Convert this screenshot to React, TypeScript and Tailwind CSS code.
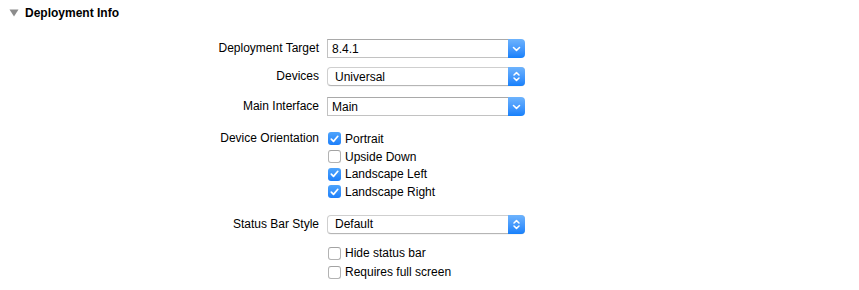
const font = { fontFamily: '"Liberation Sans", Arial, sans-serif' };

function ChevronDown() {
	return (
		<svg width="9" height="6" viewBox="0 0 9 6" className="block">
			<path d="M1.5 1.5 L4.5 4.3 L7.5 1.5" fill="none" stroke="white" strokeWidth="1.6" strokeLinecap="round" strokeLinejoin="round" />
		</svg>
	);
}

function ChevronUpDown() {
	return (
		<svg width="9" height="13" viewBox="0 0 9 13" className="block">
			<path d="M2 5 L4.5 2.6 L7 5" fill="none" stroke="white" strokeWidth="1.5" strokeLinecap="round" strokeLinejoin="round" />
			<path d="M2 8 L4.5 10.4 L7 8" fill="none" stroke="white" strokeWidth="1.5" strokeLinecap="round" strokeLinejoin="round" />
		</svg>
	);
}

function ComboBox({ value }: { value: string }) {
	return (
		<div className="flex h-[19px] w-[198px]">
			<div className="flex flex-1 items-center border border-r-0 border-[#c2c2c2] border-t-[#a9a9a9] bg-white pl-[4px] text-[12px] text-black">
				{value}
			</div>
			<div className="flex w-[17px] items-center justify-center rounded-r-[4px] bg-gradient-to-b from-[#6db3fd] to-[#1480fb]">
				<ChevronDown />
			</div>
		</div>
	);
}

function PopUp({ value }: { value: string }) {
	return (
		<div className="flex h-[19px] w-[198px] rounded-[4px] border border-[#cfcfcf] border-b-[#b5b5b5] bg-white shadow-[0_0.5px_0.5px_rgba(0,0,0,0.08)]">
			<div className="flex flex-1 items-center pl-[7px] text-[12px] text-black">{value}</div>
			<div className="-my-px -mr-px flex w-[17px] items-center justify-center rounded-r-[4px] bg-gradient-to-b from-[#6db3fd] to-[#1480fb]">
				<ChevronUpDown />
			</div>
		</div>
	);
}

function Check({ checked, label, h }: { checked: boolean; label: string; h: string }) {
	return (
		<div className={`flex items-center ${h}`}>
			{checked ? (
				<div className="ml-px flex h-[13px] w-[13px] items-center justify-center rounded-[3px] bg-gradient-to-b from-[#4ea4fc] to-[#1c7ffa]">
					<svg width="9" height="8" viewBox="0 0 9 8" className="block">
						<path d="M1.3 4.2 L3.5 6.4 L7.8 1.3" fill="none" stroke="white" strokeWidth="1.7" strokeLinecap="round" strokeLinejoin="round" />
					</svg>
				</div>
			) : (
				<div className="ml-px h-[13px] w-[13px] rounded-[3px] border border-[#b3b3b3] border-t-[#a3a3a3] bg-white" />
			)}
			<span className="ml-[4px] text-[12px] text-black">{label}</span>
		</div>
	);
}

function Row({ label, children, className = "" }: { label: string; children: React.ReactNode; className?: string }) {
	return (
		<div className={`flex ${className}`}>
			<div className="w-[319px] text-right text-[12px] leading-[19px] text-black">{label}</div>
			<div className="ml-[8px]">{children}</div>
		</div>
	);
}

export default function App() {
	return (
		<div className="h-[290px] w-[859px] bg-white" style={font}>
			<div className="flex h-[26px] items-center pl-[9px]">
				<svg width="10" height="8" viewBox="0 0 10 8" className="block">
					<path d="M0.5 0.5 L9.5 0.5 L5 7.5 Z" fill="#8c8c8c" />
				</svg>
				<span className="ml-[6px] text-[12px] font-bold text-black">Deployment Info</span>
			</div>

			<Row label="Deployment Target" className="mt-[13px]">
				<ComboBox value="8.4.1" />
			</Row>
			<Row label="Devices" className="mt-[9px]">
				<PopUp value="Universal" />
			</Row>
			<Row label="Main Interface" className="mt-[11px]">
				<ComboBox value="Main" />
			</Row>

			<div className="mt-[14px] flex">
				<div className="w-[319px] text-right text-[12px] leading-[17.7px] text-black">Device Orientation</div>
				<div className="ml-[8px] flex flex-col">
					<Check checked label="Portrait" h="h-[17.7px]" />
					<Check checked={false} label="Upside Down" h="h-[17.7px]" />
					<Check checked label="Landscape Left" h="h-[17.7px]" />
					<Check checked label="Landscape Right" h="h-[17.7px]" />
				</div>
			</div>

			<Row label="Status Bar Style" className="mt-[14px]">
				<PopUp value="Default" />
			</Row>

			<div className="mt-[10px] ml-[327px] flex flex-col">
				<Check checked={false} label="Hide status bar" h="h-[19px]" />
				<Check checked={false} label="Requires full screen" h="h-[19px]" />
			</div>
		</div>
	);
}
